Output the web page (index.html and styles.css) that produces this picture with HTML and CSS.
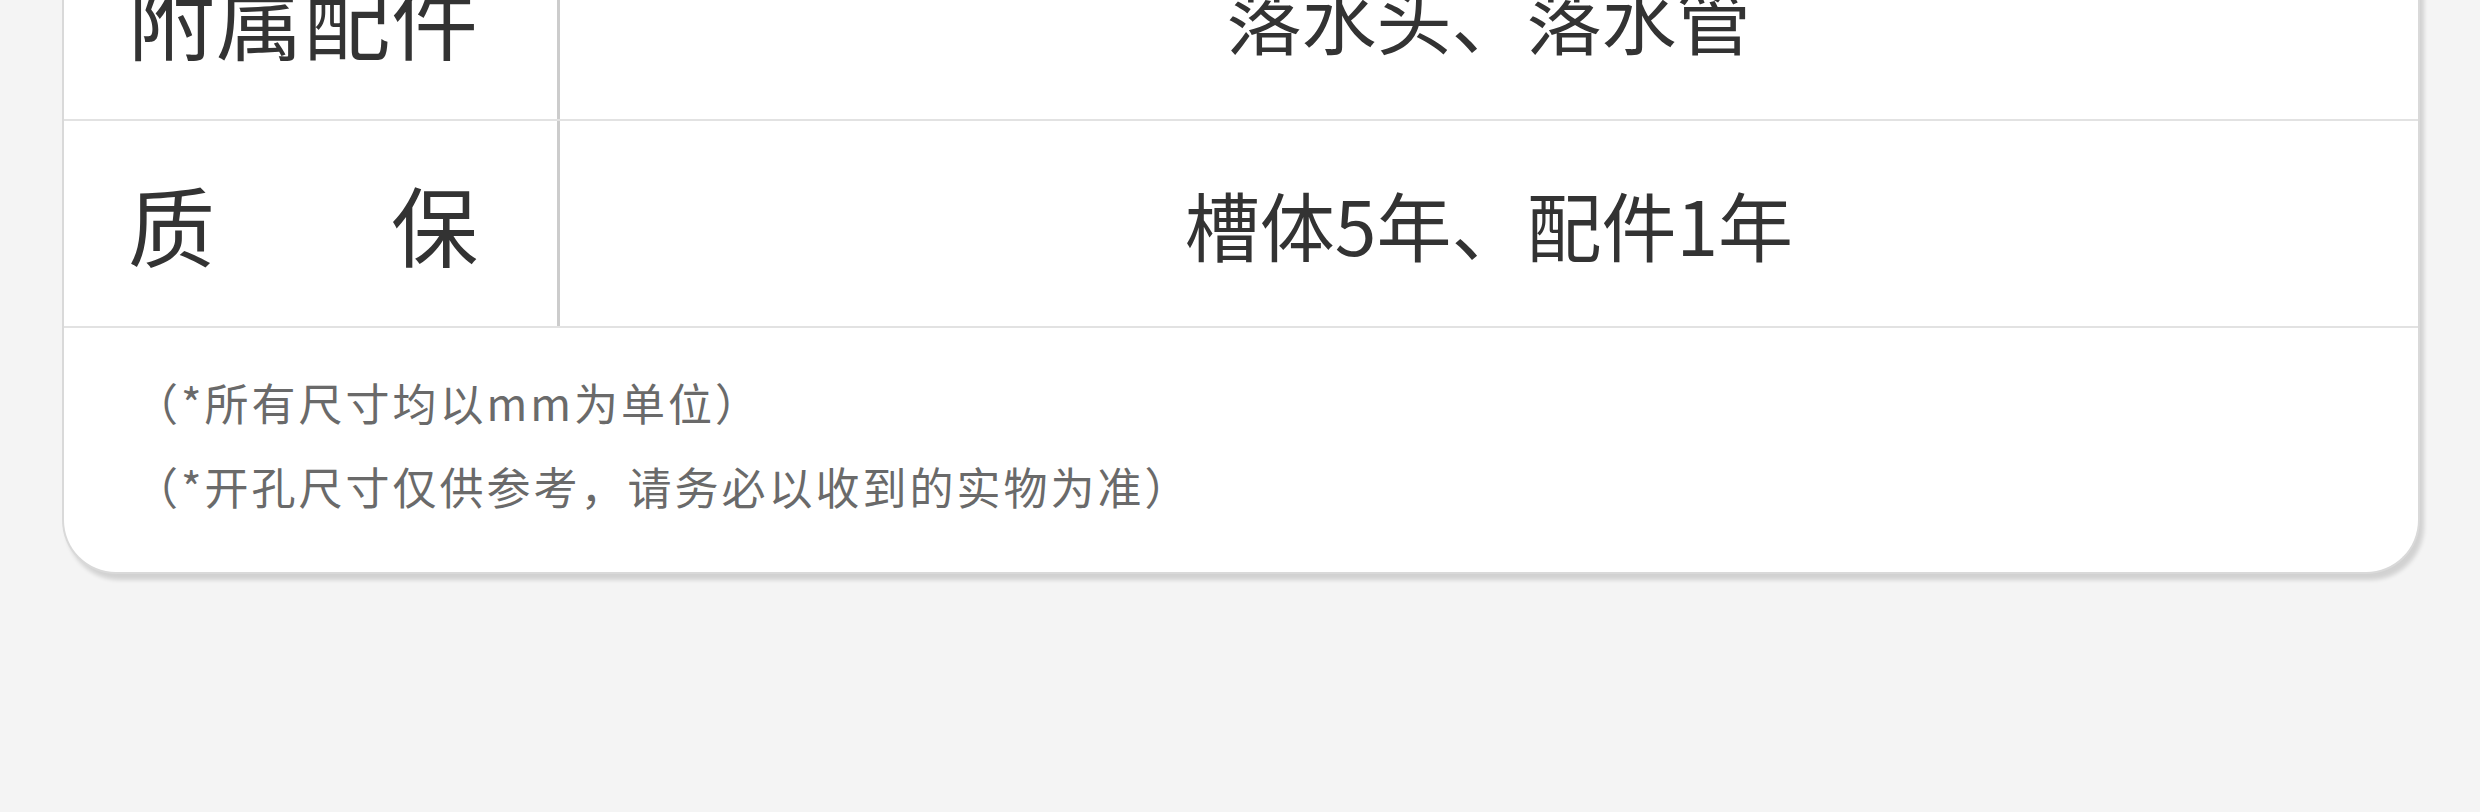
FILE: index.html
```html
<!DOCTYPE html>
<html lang="zh-CN">
<head>
  <meta charset="UTF-8">
  <title>产品参数</title>
<link rel="stylesheet" href="styles.css">
</head>
<body>

  <div class="spec-card">
    <div class="spec-row">
      <div class="spec-label"><span>附属配件</span></div>
      <div class="spec-value">落水头、落水管</div>
    </div>
    <div class="spec-row">
      <div class="spec-label"><span>质保</span></div>
      <div class="spec-value">槽体5年、配件1年</div>
    </div>
    <div class="spec-notes">
      <p>（*所有尺寸均以mm为单位）</p>
      <p>（*开孔尺寸仅供参考，请务必以收到的实物为准）</p>
    </div>
  </div>

</body>
</html>
```

FILE: styles.css
```css
/* spec table card, bottom part of a product detail page */
:root {
  --bg:     #f4f4f4;
  --card:   #ffffff;
  --text:   #333333;
  --subtle: #6a6a6a;
  --line:   #e2e2e2;
  --rule:   #cccccc;
  --edge:   #d9d9d9;
}

body {
  margin: 0;
  height: 812px;
  overflow: hidden;
  background: var(--bg);
  color: var(--text);
  font-family: "Noto Sans CJK SC", "Noto Sans", sans-serif;
}

.spec-card {
  /* top rows of the table are scrolled off the top */
  margin: -86px 60px 0 62px;
  background: var(--card);
  border: 2px solid var(--edge);
  border-top: none;
  border-radius: 0 0 54px 54px;
  box-shadow: 4px 6px 4px rgba(0,0,0,0.14);
}

.spec-row {
  display: flex;
  height: 205px;
  border-bottom: 2px solid var(--line);
}

.spec-label {
  width: 429px;
  padding-left: 64px;
  border-right: 3px solid var(--rule);
  display: flex;
  align-items: center;
  font-size: 87px;
  line-height: 1;
}
.spec-label span {
  display: block;
  width: 350px;
  text-align: justify;
  text-align-last: justify;
}

.spec-value {
  flex: 1;
  display: flex;
  align-items: center;
  justify-content: center;
  font-size: 75px;
  line-height: 1;
}

.spec-notes {
  padding: 32px 0 44px 70px;
  color: var(--subtle);
  font-size: 44px;
  letter-spacing: 3px;
  line-height: 84px;
}
.spec-notes p {
  margin: 0;
}
```
